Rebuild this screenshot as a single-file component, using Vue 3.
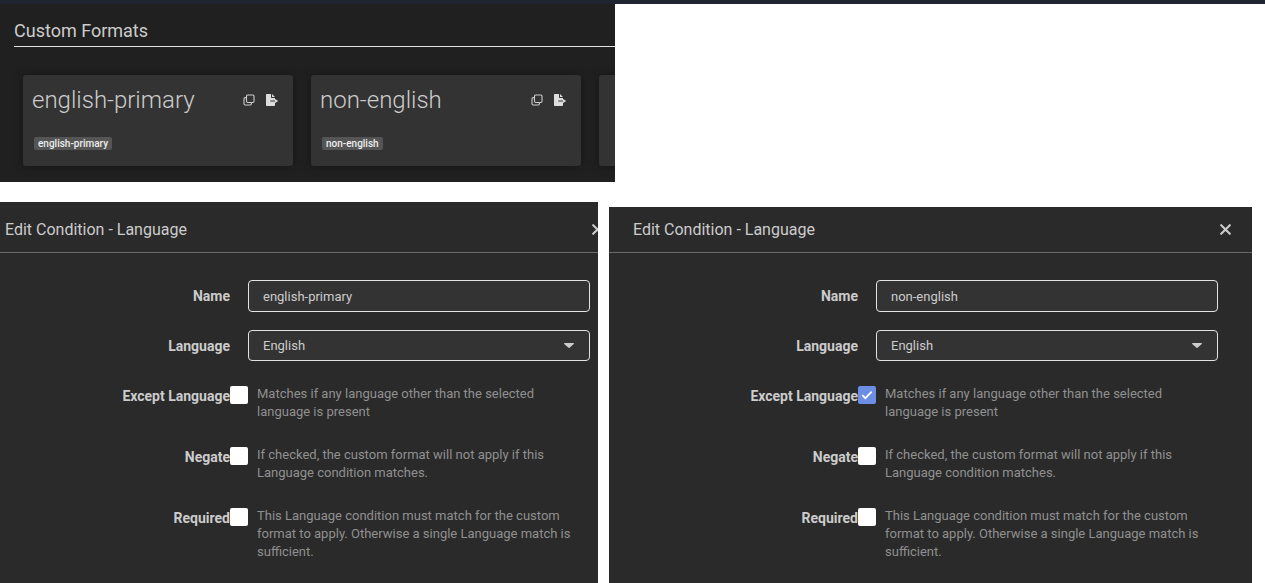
<template>
  <div class="page">
    <div class="top-strip"></div>

    <section class="formats">
      <h2 class="formats-title">Custom Formats</h2>
      <div class="card-row">
        <div v-for="card in cards" :key="card" class="card">
          <div class="card-head">
            <span class="card-name">{{ card }}</span>
            <svg class="icon-clone" width="12" height="12" viewBox="0 0 12 12" fill="none">
              <rect x="3.5" y="1" width="7.5" height="7.5" rx="1.2" stroke="currentColor" stroke-width="1.1"/>
              <path d="M3.5 3.6H2.2A1.2 1.2 0 001 4.8v5a1.2 1.2 0 001.2 1.2h5a1.2 1.2 0 001.2-1.2V8.5" stroke="currentColor" stroke-width="1.1"/>
            </svg>
            <svg class="icon-export" width="13" height="12" viewBox="0 0 13 12">
              <path d="M.6 0H5v3.2c0 .4.3.7.7.7H9v2.6H4.7a.5.5 0 000 1.1H9v3.7c0 .4-.3.7-.7.7H.7a.7.7 0 01-.7-.7V.7C0 .3.3 0 .6 0zM6 0l3 3H6V0zM9 6.5V4.9l3.2 2.1L9 9.1V7.6z" fill="currentColor"/>
            </svg>
          </div>
          <span class="tag">{{ card }}</span>
        </div>
        <div class="card"></div>
      </div>
    </section>

    <div class="modal-row">
      <div v-for="modal in modals" :key="modal.name" class="modal-clip" :class="modal.side">
        <div class="modal">
          <div class="modal-header">
            <span>Edit Condition - Language</span>
            <svg class="close" width="11" height="11" viewBox="0 0 11 11">
              <path d="M1.2 1.2l8.6 8.6m0-8.6l-8.6 8.6" stroke="currentColor" stroke-width="2.1" stroke-linecap="round"/>
            </svg>
          </div>
          <div class="modal-body">
            <div class="form-row field-row">
              <label>Name</label>
              <div class="field">{{ modal.name }}</div>
            </div>
            <div class="form-row field-row lang-row">
              <label>Language</label>
              <div class="field select">
                English
                <svg width="10" height="5" viewBox="0 0 10 5"><path d="M.7 0h8.6c.6 0 .9.7.5 1.1L5.5 4.7c-.3.3-.7.3-1 0L.2 1.1C-.2.7.1 0 .7 0z" fill="currentColor"/></svg>
              </div>
            </div>
            <div v-for="opt in options" :key="opt.label" class="form-row check-row" :class="opt.cls">
              <label>{{ opt.label }}</label>
              <span class="box" :class="{ checked: opt.label === 'Except Language' && modal.except }">
                <svg v-if="opt.label === 'Except Language' && modal.except" width="12" height="10" viewBox="0 0 12 10" fill="none">
                  <path d="M1.3 5.2l3 3 6.4-6.6" stroke="#fff" stroke-width="1.7"/>
                </svg>
              </span>
              <p class="help">{{ opt.help }}</p>
            </div>
          </div>
        </div>
      </div>
    </div>
  </div>
</template>

<script setup>
const cards = ['english-primary', 'non-english']

const modals = [
  { side: 'left', name: 'english-primary', except: false },
  { side: 'right', name: 'non-english', except: true }
]

const options = [
  {
    label: 'Except Language',
    cls: 'opt-except',
    help: 'Matches if any language other than the selected language is present'
  },
  {
    label: 'Negate',
    cls: 'opt-negate',
    help: 'If checked, the custom format will not apply if this Language condition matches.'
  },
  {
    label: 'Required',
    cls: 'opt-required',
    help: 'This Language condition must match for the custom format to apply. Otherwise a single Language match is sufficient.'
  }
]
</script>

<style>
html, body {
  background: #fff;
  overflow: hidden;
}
</style>

<style scoped>
.page {
  height: 583px;
  overflow: hidden;
  background: #fff;
  font-family: Roboto, "Liberation Sans", sans-serif;
}

.top-strip {
  height: 4px;
  background: #1f2430;
}

.formats {
  width: 615px;
  height: 178px;
  padding-top: 14px;
  box-sizing: border-box;
  background: #202020;
  overflow: hidden;
}

.formats-title {
  margin: 0 0 0 14px;
  height: 28px;
  line-height: 25px;
  font-size: 18px;
  font-weight: 400;
  color: #ccc;
  border-bottom: 1px solid #e1e2e3;
}

.card-row {
  display: flex;
  gap: 18px;
  padding: 28px 0 0 23px;
}

.card {
  flex: none;
  width: 270px;
  height: 91px;
  padding: 9px 14px 0 9px;
  box-sizing: border-box;
  border-radius: 3px;
  background: #333;
  box-shadow: 0 0 10px rgba(0, 0, 0, 0.35);
}

.card-head {
  display: flex;
  align-items: center;
  height: 32px;
  color: #ddd;
}

.card-name {
  flex: 1;
  font-size: 24px;
  font-weight: 300;
  color: #ccc;
}

.icon-clone {
  margin-right: 11px;
  color: #ccc;
}

.icon-export {
  color: #ddd;
}

.tag {
  display: inline-block;
  margin: 21px 0 0 2px;
  padding: 0 4px;
  height: 13px;
  line-height: 13px;
  border-radius: 2px;
  background: #555;
  color: #eee;
  font-size: 10px;
  font-weight: 500;
}

.modal-row {
  display: flex;
  align-items: flex-start;
  gap: 11px;
  margin-top: 20px;
}

.modal-clip {
  height: 381px;
  overflow: hidden;
  flex: none;
}

.modal-clip.left {
  width: 598px;
}

.modal-clip.right {
  width: 643px;
  margin-top: 5px;
}

.modal-clip.left .modal {
  margin-left: -19px;
}

.modal-clip.left .modal-header {
  height: 51px;
  padding-top: 5px;
}

.modal {
  width: 643px;
  height: 381px;
  background: #2a2a2a;
}

.modal-header {
  display: flex;
  align-items: center;
  justify-content: space-between;
  height: 46px;
  box-sizing: border-box;
  padding: 0 21px 0 24px;
  border-bottom: 1px solid #6a6a6a;
  font-size: 16px;
  color: #ccc;
}

.close {
  color: #ccc;
}

.modal-body {
  padding-top: 27px;
}

.form-row {
  display: grid;
  grid-template-columns: 249px 18px 1fr;
  column-gap: 0;
  color: #ccc;
  font-size: 14px;
}

.form-row label {
  grid-column: 1;
  text-align: right;
  font-weight: 700;
  color: #ccc;
}

.field-row {
  align-items: center;
  height: 32px;
  grid-template-columns: 249px 18px 342px;
}

.lang-row {
  margin-top: 18px;
  height: 31px;
}

.field {
  grid-column: 3;
  display: flex;
  align-items: center;
  justify-content: space-between;
  box-sizing: border-box;
  height: 100%;
  padding: 0 15px 0 14px;
  border: 1px solid #e1e2e3;
  border-radius: 4px;
  background: #333;
  line-height: 1;
  font-size: 13px;
  color: #ccc;
}

.field svg {
  color: #ccc;
}

.check-row {
  grid-template-columns: 249px 18px 9px 1fr;
  height: 18px;
}

.check-row label {
  line-height: 20px;
}

.opt-except {
  margin-top: 25px;
}

.opt-negate {
  margin-top: 43px;
}

.opt-required {
  margin-top: 43px;
}

.box {
  grid-column: 2;
  width: 18px;
  height: 18px;
  display: flex;
  align-items: center;
  justify-content: center;
  border-radius: 2px;
  background: #fff;
}

.box.checked {
  background: #6c8fe6;
}

.help {
  grid-column: 4;
  margin: -1px 0 0;
  width: 320px;
  line-height: 18px;
  font-size: 13px;
  color: #909090;
}
</style>
